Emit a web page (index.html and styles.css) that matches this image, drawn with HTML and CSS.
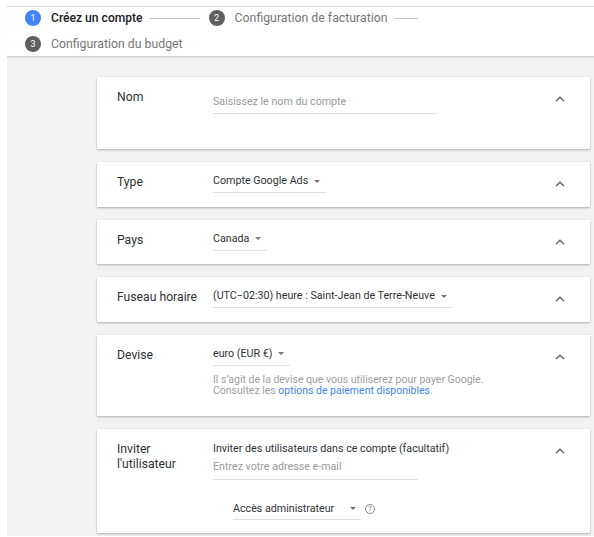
FILE: index.html
```html
<!DOCTYPE html>
<html lang="fr">
<head>
<meta charset="utf-8">
<title>Créez un compte</title>
<link rel="stylesheet" href="styles.css">
</head>
<body>
<div class="frame">
  <header class="stepper">
    <div class="step-row">
      <div class="step active"><span class="num">1</span><span class="step-label">Créez un compte</span><span class="connector c1"></span></div>
      <div class="step"><span class="num">2</span><span class="step-label">Configuration de facturation</span><span class="connector c2"></span></div>
    </div>
    <div class="step-row">
      <div class="step"><span class="num">3</span><span class="step-label">Configuration du budget</span></div>
    </div>
  </header>
  <main class="panel">
    <section class="card card-nom">
      <div class="label">Nom</div>
      <div class="field">
        <div class="text-input w-nom">Saisissez le nom du compte</div>
      </div>
      <span class="collapse"><svg width="10" height="6" viewBox="0 0 10 6"><polyline points="1,5 5,1.2 9,5" fill="none" stroke="#5f6368" stroke-width="1.5"/></svg></span>
    </section>

    <section class="card">
      <div class="label">Type</div>
      <div class="field">
        <div class="select"><span>Compte Google Ads</span><span class="caret"></span></div>
      </div>
      <span class="collapse"><svg width="10" height="6" viewBox="0 0 10 6"><polyline points="1,5 5,1.2 9,5" fill="none" stroke="#5f6368" stroke-width="1.5"/></svg></span>
    </section>

    <section class="card">
      <div class="label">Pays</div>
      <div class="field">
        <div class="select"><span>Canada</span><span class="caret"></span></div>
      </div>
      <span class="collapse"><svg width="10" height="6" viewBox="0 0 10 6"><polyline points="1,5 5,1.2 9,5" fill="none" stroke="#5f6368" stroke-width="1.5"/></svg></span>
    </section>

    <section class="card">
      <div class="label">Fuseau horaire</div>
      <div class="field">
        <div class="select"><span>(UTC−02:30) heure : Saint-Jean de Terre-Neuve</span><span class="caret"></span></div>
      </div>
      <span class="collapse"><svg width="10" height="6" viewBox="0 0 10 6"><polyline points="1,5 5,1.2 9,5" fill="none" stroke="#5f6368" stroke-width="1.5"/></svg></span>
    </section>

    <section class="card card-devise">
      <div class="label">Devise</div>
      <div class="field">
        <div class="select"><span>euro (EUR €)</span><span class="caret"></span></div>
        <p class="help">Il s’agit de la devise que vous utiliserez pour payer Google.<br>Consultez les <a href="#" class="link">options de paiement disponibles</a>.</p>
      </div>
      <span class="collapse"><svg width="10" height="6" viewBox="0 0 10 6"><polyline points="1,5 5,1.2 9,5" fill="none" stroke="#5f6368" stroke-width="1.5"/></svg></span>
    </section>

    <section class="card card-invite">
      <div class="label">Inviter<br>l'utilisateur</div>
      <div class="field">
        <div class="field-title">Inviter des utilisateurs dans ce compte (facultatif)</div>
        <div class="text-input w-mail">Entrez votre adresse e-mail</div>
        <div class="access-row">
          <div class="select select-access"><span>Accès administrateur</span><span class="caret"></span></div>
          <span class="help-icon">?</span>
        </div>
      </div>
      <span class="collapse"><svg width="10" height="6" viewBox="0 0 10 6"><polyline points="1,5 5,1.2 9,5" fill="none" stroke="#5f6368" stroke-width="1.5"/></svg></span>
    </section>
  </main>
</div>
</body>
</html>
```

FILE: styles.css
```css
* { box-sizing: border-box; }

html, body {
  margin: 0;
  padding: 0;
  background: #ffffff;
  font-family: Roboto, "Noto Sans", "Liberation Sans", sans-serif;
  color: #202124;
}

.frame {
  margin: 6px 0 1px 7px;
}

/* ---------- stepper ---------- */
.stepper {
  border-top: 1px solid #d2d2d2;
  border-bottom: 1px solid #d6d6d6;
  background: #fff;
  padding: 0 0 1px 18px;
  display: flex;
  flex-direction: column;
  gap: 4px;
  box-shadow: 0 1px 1px rgba(0,0,0,0.06);
  position: relative;
  z-index: 1;
}

.step-row {
  display: flex;
  align-items: center;
  height: 22px;
}

.step {
  display: flex;
  align-items: center;
}

.num {
  width: 16px;
  height: 16px;
  border-radius: 50%;
  background: #5f5f5f;
  color: #fff;
  font-size: 9px;
  line-height: 16px;
  text-align: center;
  flex: none;
}

.step.active .num {
  background: #4285f4;
}

.step-label {
  margin-left: 10px;
  font-size: 12.3px;
  color: #757575;
  white-space: nowrap;
}

.step.active .step-label {
  color: #202124;
  font-weight: 500;
  font-size: 12.1px;
}

.connector {
  height: 1px;
  background: #c4c4c4;
  margin-left: 6px;
}

.c1 { width: 51px; margin-right: 9px; }
.c2 { width: 24px; }

/* ---------- panel & cards ---------- */
.panel {
  background: #f1f2f4;
  padding: 20px 4px 4px 90px;
  height: 479px;
  display: flex;
  flex-direction: column;
  gap: 13px;
}

.card {
  display: flex;
  background: #fff;
  padding: 10px 20px 13.5px 20px;
  box-shadow: 0 1px 2px rgba(0,0,0,0.28), 0 0 1px rgba(0,0,0,0.08);
}

.card-nom { padding-bottom: 35px; }
.card-devise { padding-bottom: 19px; }
.card-invite { padding-bottom: 13px; }

.label {
  width: 96px;
  flex: none;
  font-size: 12.2px;
  line-height: 15px;
  padding-top: 3px;
  color: #303134;
}

.field {
  flex: 1;
  font-size: 10.7px;
}

.collapse {
  flex: none;
  width: 20px;
  height: 12px;
  margin-top: 6px;
  display: flex;
  align-items: center;
  justify-content: center;
}

.text-input {
  line-height: 18px;
  color: #9a9a9a;
  border-bottom: 1px solid #e0e0e0;
}

.w-nom { width: 224px; margin-top: 6px; padding-bottom: 2px; }
.w-mail { width: 205px; padding-bottom: 3px; }

.select {
  display: inline-flex;
  align-items: center;
  line-height: 18px;
  padding-bottom: 2px;
  padding-right: 6px;
  border-bottom: 1px solid #e0e0e0;
  color: #303134;
}

.caret {
  width: 0;
  height: 0;
  margin-left: 6px;
  border-left: 3.5px solid transparent;
  border-right: 3.5px solid transparent;
  border-top: 3.5px solid #757575;
}

.help {
  margin: 8px 0 0;
  font-size: 10.5px;
  line-height: 11.5px;
  color: #9e9e9e;
}

.link {
  color: #4285f4;
  text-decoration: none;
}

.field-title {
  margin-top: 1px;
  line-height: 18px;
  color: #303134;
}

.access-row {
  display: flex;
  align-items: center;
  margin-top: 20px;
  margin-left: 20px;
}

.select-access {
  width: 128px;
  justify-content: space-between;
  padding-bottom: 1px;
  padding-right: 5px;
}

.help-icon {
  width: 10px;
  height: 10px;
  margin-left: 4px;
  margin-top: -2px;
  border: 1px solid #8a8a8a;
  border-radius: 50%;
  font-size: 7px;
  line-height: 8px;
  text-align: center;
  color: #757575;
}
```
